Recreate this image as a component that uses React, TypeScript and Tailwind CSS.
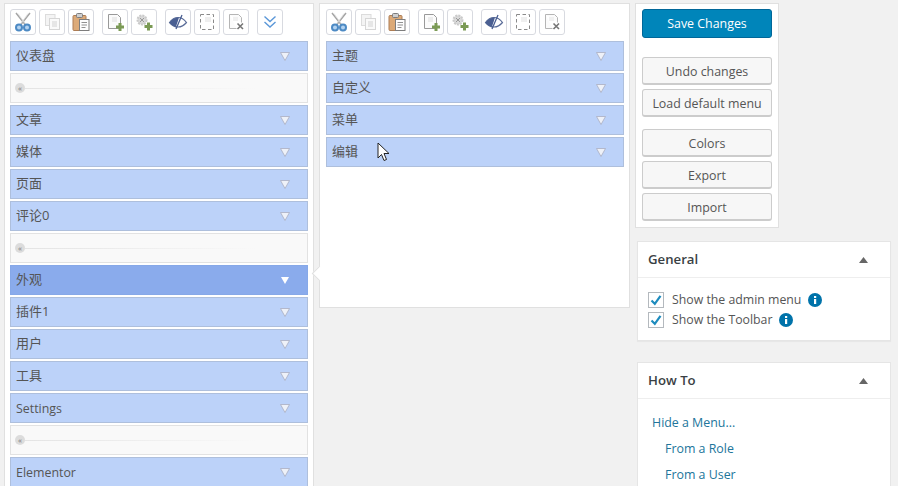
import React from "react";

const cjk = "font-['Open_Sans','Noto_Sans_CJK_SC',sans-serif]";

function Scissors() {
  return (
    <svg width="20" height="20" viewBox="0 0 20 20" fill="none">
      <path d="M3 1l9.500 12M17 1L7.500 13" stroke="#a5a5a5" strokeWidth="1.500" />
      <path d="M5 1.500l7 10M15 1.500l-7 10" stroke="#dedede" strokeWidth="0.800" />
      <circle cx="6" cy="15.500" r="3" stroke="#4d8ac4" strokeWidth="2" fill="#b3d2f0" />
      <circle cx="14" cy="15.500" r="3" stroke="#4d8ac4" strokeWidth="2" fill="#b3d2f0" />
    </svg>
  );
}
function Copy() {
  return (
    <svg width="20" height="20" viewBox="0 0 20 20" fill="none">
      <rect x="3.500" y="2.500" width="9.500" height="11" fill="#f4f4f4" stroke="#dcdcdc" />
      <rect x="7.500" y="6.500" width="10" height="11" fill="#fafafa" stroke="#d6d6d6" />
      <rect x="10" y="9" width="5" height="6" fill="#e6e6e6" />
    </svg>
  );
}
function Paste() {
  return (
    <svg width="20" height="20" viewBox="0 0 20 20" fill="none">
      <rect x="2" y="3.500" width="13" height="15" rx="1" fill="#dcaa78" stroke="#ad7d55" />
      <rect x="5.500" y="1.500" width="6" height="4" rx="1" fill="#cfcfcf" stroke="#7d7d7d" />
      <rect x="8.500" y="7.500" width="9.500" height="11" fill="#fdfdfd" stroke="#7d7d7d" />
      <path d="M10.500 10.500h5.500M10.500 13h5.500M10.500 15.500h4" stroke="#909090" />
    </svg>
  );
}
function Plus({ x, y }: { x: number; y: number }) {
  return <path transform={`translate(${x} ${y})`} d="M2.500 0h3v2.500H8v3H5.500V8h-3V5.500H0v-3h2.500z" fill="#7b9a55" />;
}
function NewPage() {
  return (
    <svg width="20" height="20" viewBox="0 0 20 20" fill="none">
      <path d="M3.500 2.500h9l3 3v11h-12z" fill="#fbfbfb" stroke="#999999" />
      <path d="M7 5h5v5H7z" fill="#ececec" />
      <Plus x={11} y={11} />
    </svg>
  );
}
function NewGear() {
  return (
    <svg width="20" height="20" viewBox="0 0 20 20" fill="none">
      <circle cx="8" cy="8" r="4.500" fill="#dadada" stroke="#cacaca" strokeDasharray="2 1" strokeWidth="2" />
      <path d="M6 6l4 4M6 10l4-4" stroke="#9a9a9a" />
      <Plus x={10.500} y={10.500} />
    </svg>
  );
}
function Eye() {
  return (
    <svg width="20" height="20" viewBox="0 0 20 20" fill="none">
      <path d="M1.500 10.500C4 7 7 5.500 10 5.500s6 1.500 8.500 5c-2.500 3-5.500 4.500-8.500 4.500s-6-1.500-8.500-4.500z" fill="#fff" stroke="#5a6c98" strokeWidth="1.200" />
      <path d="M1.500 10.500C4 7 7 5.500 11 5.500l-3 9.200c-2.500-.4-4.500-1.700-6.500-4.200z" fill="#4a5f92" />
      <path d="M14 3l-6 14" stroke="#4a5f92" strokeWidth="1.300" />
    </svg>
  );
}
function Dashed() {
  return (
    <svg width="20" height="20" viewBox="0 0 20 20" fill="none">
      <path d="M3.500 2.500h13v15h-13z" stroke="#8a8a8a" strokeDasharray="3.500 2.500" />
      <path d="M8 5h6v5H8z" fill="#efefef" />
    </svg>
  );
}
function DeletePage() {
  return (
    <svg width="20" height="20" viewBox="0 0 20 20" fill="none">
      <path d="M3.500 2.500h9l3 3v5M3.500 2.500v14h7" fill="#fbfbfb" stroke="#b5b5b5" />
      <path d="M7 5h5v4H7z" fill="#f0f0f0" />
      <path d="M11.500 11.500l5.500 5.500M17 11.500L11.500 17" stroke="#757575" strokeWidth="1.600" />
    </svg>
  );
}
function Chevrons() {
  return (
    <svg width="20" height="20" viewBox="0 0 20 20" fill="none">
      <path d="M4.500 4.500L10 9.500l5.500-5M4.500 10L10 15l5.500-5" stroke="#5a97d8" strokeWidth="1.400" />
    </svg>
  );
}

function ToolBtn({ children, className = "" }: { children: React.ReactNode; className?: string }) {
  return (
    <div className={`flex h-[26px] w-[26px] items-center justify-center rounded-[3px] border border-[#d8dae0] bg-white ${className}`}>
      {children}
    </div>
  );
}

function Toolbar({ extra }: { extra?: boolean }) {
  return (
    <div className="mb-[4px] flex h-[26px] gap-[3px]">
      <ToolBtn><Scissors /></ToolBtn>
      <ToolBtn><Copy /></ToolBtn>
      <ToolBtn><Paste /></ToolBtn>
      <ToolBtn className="ml-[5px]"><NewPage /></ToolBtn>
      <ToolBtn><NewGear /></ToolBtn>
      <ToolBtn className="ml-[5px]"><Eye /></ToolBtn>
      <ToolBtn><Dashed /></ToolBtn>
      <ToolBtn><DeletePage /></ToolBtn>
      {extra && <ToolBtn className="ml-[5px]"><Chevrons /></ToolBtn>}
    </div>
  );
}

function Arrow({ active }: { active?: boolean }) {
  return (
    <svg width="10" height="9" viewBox="0 0 10 9" className="absolute right-[17px] top-[10px]">
      {active ? (
        <path d="M1 1h8L5 8z" fill="#ffffff" />
      ) : (
        <path d="M0.500 0.500h9L5 8.500z" fill="#eef1f8" stroke="#a9adc0" strokeWidth="0.800" />
      )}
    </svg>
  );
}

function Item({ label, active, latin }: { label: string; active?: boolean; latin?: boolean }) {
  return (
    <div
      className={`relative flex h-[30px] items-center border pl-[5px] text-[#555] ${latin ? "pt-[2px] text-[12.4px]" : "text-[13px]"} ${cjk} ${
        active ? "border-[#86a8e8] bg-[#8aabec]" : "border-[#aebfdc] bg-[#bcd2f9]"
      }`}
    >
      {label}
      <Arrow active={active} />
    </div>
  );
}

function Separator() {
  return (
    <div className="flex h-[30px] items-center border border-[#e2e2e2] bg-[#f9f9f9] pl-[4px]">
      <div className="flex h-[10px] w-[10px] items-center justify-center rounded-full bg-[#dcdcdc] text-[8px] leading-none text-[#777]">«</div>
      <div className="h-px w-[232px] bg-gradient-to-r from-[#e4e4e4] to-[#f9f9f9]" />
    </div>
  );
}

function SideBtn({ label, className = "" }: { label: string; className?: string }) {
  return (
    <div className={`flex h-[28px] items-center justify-center rounded-[3px] border border-b-[2px] border-[#cccccc] bg-[#f7f7f7] pt-[3px] text-[12.4px] text-[#555] ${className}`}>
      {label}
    </div>
  );
}

function Info({ className = "" }: { className?: string }) {
  return (
    <svg width="14" height="14" viewBox="0 0 14 14" className={className}>
      <circle cx="7" cy="7" r="7" fill="#0073aa" />
      <rect x="6" y="6" width="2.200" height="5" fill="#fff" />
      <rect x="6" y="3" width="2.200" height="2" fill="#fff" />
    </svg>
  );
}

function Check({ label }: { label: string }) {
  return (
    <div className="flex h-5 items-center text-[12.3px] text-[#555]">
      <div className="mr-[8px] flex h-4 w-4 items-center justify-center border border-[#b4b9be] bg-white">
        <svg width="14" height="14" viewBox="0 0 14 14" fill="none">
          <path d="M2.500 7.500L5.800 10.800 11.500 2.800" stroke="#1e8cbe" strokeWidth="2.200" />
        </svg>
      </div>
      {label}
    </div>
  );
}

function BoxHeader({ title }: { title: string }) {
  return (
    <div className="relative flex h-[36px] items-center border-b border-[#eeeeee] pl-[10px] text-[13.2px] font-semibold text-[#3a3f44]">
      {title}
      <svg width="9" height="6" viewBox="0 0 9 6" className="absolute right-[22px] top-[15px]">
        <path d="M4.500 0L9 6H0z" fill="#666" />
      </svg>
    </div>
  );
}

export default function App() {
  return (
    <div className={`relative flex h-[486px] w-[898px] items-start overflow-hidden bg-[#f1f1f1] pl-[4px] pt-[3px] ${cjk}`}>
      <div className="flex h-[520px] w-[310px] shrink-0 flex-col gap-[2px] border border-[#e0e0e0] bg-white px-[5px] pt-[5px]">
        <Toolbar extra />
        <Item label="仪表盘" />
        <Separator />
        <Item label="文章" />
        <Item label="媒体" />
        <Item label="页面" />
        <Item label="评论0" />
        <Separator />
        <Item label="外观" active />
        <Item label="插件1" />
        <Item label="用户" />
        <Item label="工具" />
        <Item label="Settings" latin />
        <Separator />
        <Item label="Elementor" latin />
      </div>

      <div className="relative ml-[5px] flex h-[305px] w-[311px] shrink-0 flex-col gap-[2px] border border-[#e0e0e0] bg-white pl-[6px] pr-[5px] pt-[5px]">
        <div className="absolute -left-[6px] top-[264px] h-[11px] w-[11px] rotate-45 border-b border-l border-[#e0e0e0] bg-white" />
        <Toolbar />
        <Item label="主题" />
        <Item label="自定义" />
        <Item label="菜单" />
        <Item label="编辑" />
      </div>

      <div className="ml-[5px] flex w-[256px] shrink-0 flex-col">
        <div className="w-[144px] border border-[#e0e0e0] bg-white px-[6px] pb-[6px] pt-[5px]">
          <div className="flex h-[29px] items-center justify-center rounded-[3px] border border-[#006799] bg-[#0085ba] pt-[2px] text-[12.4px] text-white">
            Save Changes
          </div>
          <SideBtn label="Undo changes" className="mt-[19px]" />
          <SideBtn label="Load default menu" className="mt-[4px]" />
          <SideBtn label="Colors" className="mt-[12px]" />
          <SideBtn label="Export" className="mt-[4px]" />
          <SideBtn label="Import" className="mt-[4px]" />
        </div>

        <div className="ml-[2px] mt-[13px] h-[100px] w-[254px] border border-[#e5e5e5] bg-white shadow-[0_1px_1px_rgba(0,0,0,0.04)]">
          <BoxHeader title="General" />
          <div className="pl-[10px] pt-[12px]">
            <div className="flex items-center"><Check label="Show the admin menu" /><Info className="ml-[7px]" /></div>
            <div className="flex items-center"><Check label="Show the Toolbar" /><Info className="ml-[7px]" /></div>
          </div>
        </div>

        <div className="ml-[2px] mt-[21px] h-[140px] w-[254px] border border-[#e5e5e5] bg-white">
          <BoxHeader title="How To" />
          <div className="flex flex-col pl-[14px] pt-[15px] text-[12.4px] leading-[18px] text-[#21759b]">
            <div>Hide a Menu...</div>
            <div className="ml-[13px] mt-[8px]">From a Role</div>
            <div className="ml-[13px] mt-[8px]">From a User</div>
          </div>
        </div>
      </div>

      <svg width="14" height="20" viewBox="0 0 14 20" className="absolute left-[377px] top-[142px]">
        <path d="M1 1v15l3.500-3.500 2.500 6 2.500-1-2.500-6h5z" fill="#fff" stroke="#222" strokeWidth="1" />
      </svg>
    </div>
  );
}
